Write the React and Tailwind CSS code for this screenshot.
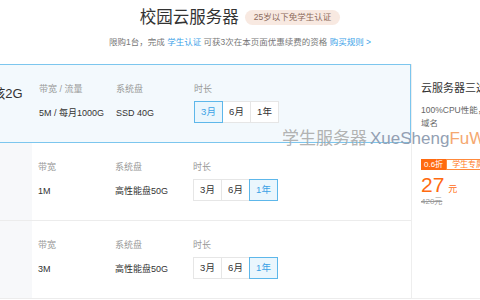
import React from "react";

const FONT = { fontFamily: '"Liberation Sans", "Noto Sans CJK SC", sans-serif' };

function Durations({ sel }) {
  const items = ["3月", "6月", "1年"];
  return (
    <div className="mt-[5px] flex">
      {items.map((t, i) => (
        <div
          key={t}
          className={
            "flex h-[22px] w-[29px] items-center justify-center border text-[9.5px] " +
            (i > 0 ? "-ml-px " : "") +
            (i === sel
              ? "relative z-10 border-[#5db7ea] bg-[#eaf6fd] text-[#3aa2e6]"
              : "border-[#e6e6e6] bg-white text-[#333]")
          }
        >
          {t}
        </div>
      ))}
    </div>
  );
}

function Row({ active, name, l1, v1, v2, sel }) {
  return (
    <div
      className={
        "flex " +
        (active
          ? "h-[79px] border border-[#7cc6ee] bg-[#f3f9fd]"
          : "h-[78px] border-b border-[#ececec] bg-white")
      }
    >
      <div
        className={
          "w-[92px] shrink-0 whitespace-nowrap pl-[44px] pt-[20px] text-[13px] leading-[18px] text-[#333] " +
          (active ? "" : "bg-[#f7f8fa]")
        }
      >
        {name}
      </div>
      <div className="flex pt-[17px]">
        <div className="w-[83px] shrink-0 pl-[6px]">
          <div className="whitespace-nowrap text-[9px] leading-[14px] text-[#999]">{l1}</div>
          <div className="mt-[10px] whitespace-nowrap text-[9px] leading-[14px] text-[#333]">{v1}</div>
        </div>
        <div className="w-[78px] shrink-0">
          <div className="text-[9px] leading-[14px] text-[#999]">系统盘</div>
          <div className="mt-[10px] whitespace-nowrap text-[9px] leading-[14px] text-[#333]">{v2}</div>
        </div>
        <div>
          <div className="text-[9px] leading-[14px] text-[#999]">时长</div>
          <Durations sel={sel} />
        </div>
      </div>
    </div>
  );
}

export default function App() {
  return (
    <div className="relative h-[300px] w-[480px] overflow-hidden bg-white" style={FONT}>
      <div className="flex h-[64px] flex-col items-center pt-[7px]">
        <div className="flex items-center gap-[6px]">
          <span className="text-[16.5px] leading-[20px] text-[#333]">校园云服务器</span>
          <span className="flex h-[15px] items-center rounded-full bg-[#f8e9e1] px-[9px] text-[8.5px] text-[#8b6a5b]">
            25岁以下免学生认证
          </span>
        </div>
        <div className="mt-[9px] whitespace-nowrap text-[8.5px] leading-[12px] text-[#777]">
          限购1台，完成 <span className="text-[#3ba2e8]">学生认证</span> 可获3次在本页面优惠续费的资格{" "}
          <span className="text-[#3ba2e8]">购买规则 &gt;</span>
        </div>
      </div>

      <div className="-ml-[60px] flex">
        <div className="w-[471px] shrink-0">
          <Row active name="1核2G" l1="带宽 / 流量" v1="5M / 每月1000G" v2="SSD 40G" sel={0} />
          <Row name="" l1="带宽" v1="1M" v2="高性能盘50G" sel={2} />
          <Row name="" l1="带宽" v1="3M" v2="高性能盘50G" sel={2} />
        </div>
        <div className="h-[235px] w-[220px] shrink-0 border-b border-l border-[#eeeeee] bg-white pl-[9px] pt-[16px]">
          <div className="whitespace-nowrap text-[11px] leading-[16px] text-[#333]">云服务器三选一套餐</div>
          <div className="mt-[8px] text-[8.5px] leading-[13px] text-[#666]">
            <div className="whitespace-nowrap">100%CPU性能，送免费</div>
            <div>域名</div>
          </div>
          <div className="mt-[29px] flex h-[11px] items-stretch text-[8px] leading-[9px]">
            <span className="flex items-center bg-[#ff6a10] px-[3px] text-white">0.6折</span>
            <span className="flex items-center border border-[#ff8a3c] px-[5px] text-[#ff7a26]">学生专属</span>
          </div>
          <div className="mt-[3px] flex items-baseline text-[#ff6a10]">
            <span className="text-[21px] leading-[24px]">27</span>
            <span className="ml-[4px] text-[9px]">元</span>
          </div>
          <div className="text-[8px] leading-[10px] text-[#999] line-through">420元</div>
        </div>
      </div>

      <div className="pointer-events-none absolute left-[282px] top-[129px] flex items-baseline whitespace-nowrap text-[17px] leading-[20px]">
        <span className="text-[#a9a9a9]/90">学生服务器</span>
        <span className="ml-[3px] text-[#93a0b3]">XueSheng</span>
        <span className="text-[#f5a870]">FuWu</span>
      </div>
    </div>
  );
}
